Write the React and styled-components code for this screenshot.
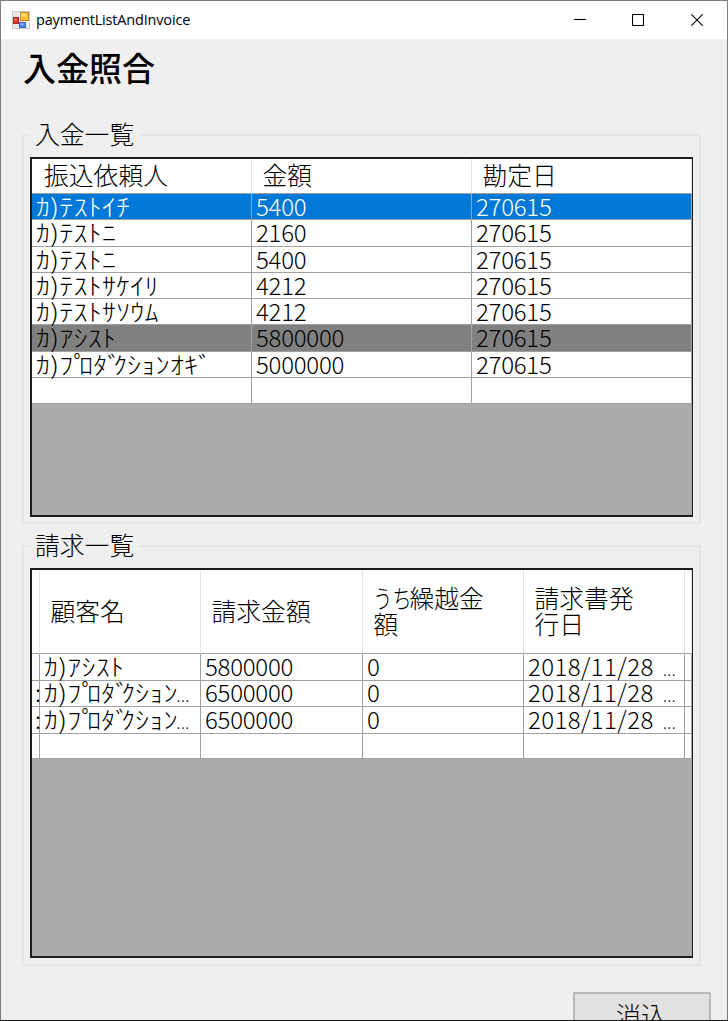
import React from 'react';
import styled, { createGlobalStyle } from 'styled-components';

const Global = createGlobalStyle`
  *, *::before, *::after { box-sizing: border-box; }
  html, body { margin: 0; padding: 0; overflow: hidden; background: #efefef; }
`;

const Window = styled.main`
  width: 728px;
  height: 1021px;
  overflow: hidden;
  display: flex;
  flex-direction: column;
  background: #efefef;
  border: 1px solid #7d7d7d;
  border-bottom-color: #1c1a1b;
  color: #000;
  font-family: 'Noto Sans CJK JP', sans-serif;
  font-weight: 300;
  font-size: 25px;
`;

const TitleBar = styled.header`
  flex: none;
  height: 38px;
  background: #fff;
  display: flex;
  align-items: center;
  padding: 0 1px 0 11px;
`;

const Caption = styled.span`
  flex: 1;
  margin-left: 6px;
  font: 400 14.5px/20px 'Open Sans', 'Noto Sans', sans-serif;
  letter-spacing: -0.17px;
`;

const CaptionButton = styled.button`
  width: 58.5px;
  height: 38px;
  padding: 0;
  border: 0;
  background: none;
  display: flex;
  align-items: center;
  justify-content: center;
`;

const Heading = styled.h1`
  flex: none;
  margin: 7px 0 0 22px;
  height: 44px;
  font-size: 33px;
  line-height: 42px;
  font-weight: 500;
`;

const Group = styled.fieldset`
  flex: none;
  margin: ${p => p.$top}px 0 0 21px;
  width: 679px;
  height: ${p => p.$height}px;
  min-width: 0;
  padding: 0 6px 6px;
  border: 2px solid #e6e6e6;
  display: flex;
  flex-direction: column;
`;

const Legend = styled.legend`
  height: 25px;
  padding: 0 5px;
  line-height: 22px;
  font-size: 24.8px;
`;

const Grid = styled.div`
  flex: none;
  margin-top: ${p => p.$top}px;
  width: 663px;
  height: ${p => p.$height}px;
  background: #ababab;
  border: 2px solid #1d1d1d;
  border-right-width: 1.5px;
`;

const Row = styled.div`
  display: grid;
  width: 660px;
  grid-template-columns: ${p => p.$cols};
  height: ${p => p.$height || 26.25}px;
  color: ${p => (p.$tone === 'selected' ? '#fff' : '#000')};
  background: ${p => ({ selected: '#0078d7', done: '#808080' }[p.$tone] || '#fff')};
`;

const HeadCell = styled.div`
  min-width: 0;
  display: flex;
  align-items: center;
  padding-left: ${p => (p.$slim ? 0 : 10.5)}px;
  padding-bottom: 2px;
  border-right: 1px solid #e3e3e3;
  border-bottom: 1px solid #a0a0a0;
  font-size: 24.8px;
  line-height: 25.5px;
  white-space: pre;

  &:first-child {
    padding-left: ${p => (p.$slim ? 0 : 12)}px;
  }
`;

const Tight = styled.span`
  display: inline-block;
  width: 37px;
  transform: scaleX(0.78);
  transform-origin: 0 50%;
  margin-left: -1px;
`;

const Cell = styled.div`
  min-width: 0;
  padding-left: ${p => (p.$slim ? 3 : 4)}px;
  border-right: 1px solid #a0a0a0;
  border-bottom: 1px solid #a0a0a0;
  font-size: 24px;
  line-height: 24px;
  letter-spacing: -0.25px;
  white-space: pre;
`;

const KanaText = styled.span`
  display: inline-block;
  transform: scaleX(1.17);
  transform-origin: 0 50%;
  letter-spacing: 0.15px;
  line-height: 23px;
`;

const VoiceMark = styled.span`
  letter-spacing: -7.3px;
`;

const Dots = styled.span`
  font-size: 19px;
  font-weight: 100;
  letter-spacing: 0;
  margin-left: ${p => p.$gap}px;
`;

const Action = styled.button`
  flex: none;
  align-self: flex-end;
  margin: 26px 16px 0 0;
  width: 138px;
  height: 44px;
  padding: 0 2px 0 0;
  border: 2px solid #b8b8b8;
  background: #e1e1e1;
  color: #000;
  font: inherit;
  line-height: 34px;
`;

const AppIcon = () => (
  <svg width="18" height="18" viewBox="0 0 18 18">
    <rect x="0.5" y="0.5" width="17" height="17" fill="#e9e9ec" stroke="#c9c9cd" />
    <path d="M7.5 1v16M1 11.5h16" stroke="#fff" />
    <rect x="8.5" y="1.5" width="8" height="8" fill="#f4c534" stroke="#c98b12" />
    <rect x="9.5" y="2.5" width="4" height="3" fill="#fbe58c" />
    <rect x="1.5" y="6.5" width="5" height="6" fill="#cf3a30" stroke="#a82a22" />
    <rect x="2.5" y="7.5" width="2" height="2" fill="#ee8f82" />
    <rect x="7.5" y="11.5" width="6" height="5" fill="#4a86e0" stroke="#3a6bc0" />
    <rect x="8.5" y="12.5" width="3" height="1.5" fill="#9cc4f7" />
  </svg>
);

const glyphs = {
  minimize: 'M0 5.5h12',
  maximize: 'M0.5 0.5h11v11h-11z',
  close: 'M0.3 0.3l11.4 11.4M11.7 0.3L0.3 11.7',
};

const WindowGlyph = ({ name }) => (
  <svg width="12" height="12" viewBox="0 0 12 12" fill="none" stroke="#000" strokeWidth="1.1">
    <path d={glyphs[name]} />
  </svg>
);

// Half-width voicing marks sit close to the kana that follows them.
const Kana = ({ text }) => (
  <KanaText>
    {text.split(/([ﾞﾟ])/).map((part, i) => (/[ﾞﾟ]/.test(part) ? <VoiceMark key={i}>{part}</VoiceMark> : part))}
  </KanaText>
);

const paymentCols = '220px 220px 220px';
const payments = [
  ['ｶ)ﾃｽﾄｲﾁ', '5400', '270615', 'selected'],
  ['ｶ)ﾃｽﾄﾆ', '2160', '270615'],
  ['ｶ)ﾃｽﾄﾆ', '5400', '270615'],
  ['ｶ)ﾃｽﾄｻｹｲﾘ', '4212', '270615'],
  ['ｶ)ﾃｽﾄｻｿｳﾑ', '4212', '270615'],
  ['ｶ)ｱｼｽﾄ', '5800000', '270615', 'done'],
  ['ｶ)ﾌﾟﾛﾀﾞｸｼｮﾝｵｷﾞ', '5000000', '270615'],
  ['', '', ''],
];

const invoiceCols = '8px 161px 162px 161px 161px 7px';
const invoices = [
  ['', 'ｶ)ｱｼｽﾄ', '5800000', '0', '2018/11/28'],
  [':', 'ｶ)ﾌﾟﾛﾀﾞｸｼｮﾝ', '6500000', '0', '2018/11/28', true],
  [':', 'ｶ)ﾌﾟﾛﾀﾞｸｼｮﾝ', '6500000', '0', '2018/11/28', true],
  ['', '', '', '', ''],
];

const DateText = styled.span`
  letter-spacing: 0.4px;
`;

export default function App() {
  return (
    <>
      <Global />
      <Window>
        <TitleBar>
          <AppIcon />
          <Caption>paymentListAndInvoice</Caption>
          {Object.keys(glyphs).map(name => (
            <CaptionButton key={name} aria-label={name}>
              <WindowGlyph name={name} />
            </CaptionButton>
          ))}
        </TitleBar>
        <Heading>入金照合</Heading>
        <Group $top={32} $height={402}>
          <Legend>入金一覧</Legend>
          <Grid $top={10} $height={360}>
            <Row $cols={paymentCols} $height={35}>
              {['振込依頼人', '金額', '勘定日'].map(t => <HeadCell key={t}>{t}</HeadCell>)}
            </Row>
            {payments.map(([name, amount, date, tone], i) => (
              <Row key={i} $cols={paymentCols} $tone={tone}>
                <Cell><Kana text={name} /></Cell>
                <Cell>{amount}</Cell>
                <Cell>{date}</Cell>
              </Row>
            ))}
          </Grid>
        </Group>
        <Group $top={9} $height={433}>
          <Legend>請求一覧</Legend>
          <Grid $top={10} $height={390}>
            <Row $cols={invoiceCols} $height={84}>
              <HeadCell $slim />
              <HeadCell>顧客名</HeadCell>
              <HeadCell>請求金額</HeadCell>
              <HeadCell><div><Tight>うち</Tight>繰越金{'\n'}額</div></HeadCell>
              <HeadCell>請求書発{'\n'}行日</HeadCell>
              <HeadCell $slim />
            </Row>
            {invoices.map(([mark, name, amount, carried, date, cut], i) => (
              <Row key={i} $cols={invoiceCols}>
                <Cell $slim>{mark}</Cell>
                <Cell><Kana text={name} />{cut && <Dots $gap={18}>...</Dots>}</Cell>
                <Cell>{amount}</Cell>
                <Cell>{carried}</Cell>
                <Cell><DateText>{date}</DateText>{date && <Dots $gap={9}>...</Dots>}</Cell>
                <Cell />
              </Row>
            ))}
          </Grid>
        </Group>
        <Action>消込</Action>
      </Window>
    </>
  );
}
